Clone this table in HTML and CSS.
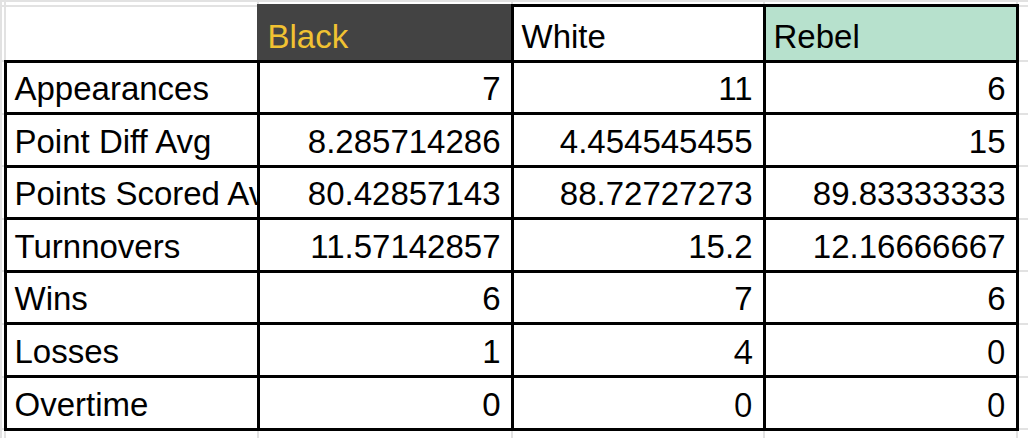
FILE: index.html
```html
<!DOCTYPE html>
<html>
<head>
<meta charset="utf-8">
<link rel="stylesheet" href="styles.css">
</head>
<body>
<table class="sheet">
  <colgroup>
    <col class="c-edge">
    <col class="c-label">
    <col class="c-black">
    <col class="c-white">
    <col class="c-rebel">
    <col class="c-rest">
  </colgroup>
  <tr class="r-top"><td></td><td></td><td></td><td></td><td></td><td></td></tr>
  <tr class="r-head">
    <td></td><td></td>
    <td class="h h-black">Black</td>
    <td class="h h-white">White</td>
    <td class="h h-rebel">Rebel</td>
    <td></td>
  </tr>
  <tr class="r-data">
    <td></td><td class="lbl">Appearances</td>
    <td class="num">7</td><td class="num">11</td><td class="num">6</td><td></td>
  </tr>
  <tr class="r-data">
    <td></td><td class="lbl">Point Diff Avg</td>
    <td class="num">8.285714286</td><td class="num">4.454545455</td><td class="num">15</td><td></td>
  </tr>
  <tr class="r-data">
    <td></td><td class="lbl">Points Scored Avg</td>
    <td class="num">80.42857143</td><td class="num">88.72727273</td><td class="num">89.83333333</td><td></td>
  </tr>
  <tr class="r-data">
    <td></td><td class="lbl">Turnnovers</td>
    <td class="num">11.57142857</td><td class="num">15.2</td><td class="num">12.16666667</td><td></td>
  </tr>
  <tr class="r-data">
    <td></td><td class="lbl">Wins</td>
    <td class="num">6</td><td class="num">7</td><td class="num">6</td><td></td>
  </tr>
  <tr class="r-data">
    <td></td><td class="lbl">Losses</td>
    <td class="num">1</td><td class="num alt">4</td><td class="num alt">0</td><td></td>
  </tr>
  <tr class="r-data">
    <td></td><td class="lbl">Overtime</td>
    <td class="num">0</td><td class="num alt">0</td><td class="num alt">0</td><td></td>
  </tr>
  <tr class="r-bottom"><td></td><td></td><td></td><td></td><td></td><td></td></tr>
</table>
</body>
</html>
```

FILE: styles.css
```css
html, body {
  margin: 0;
  padding: 0;
  background: #ffffff;
  overflow: hidden;
  width: 1028px;
  height: 438px;
}

.sheet {
  border-collapse: collapse;
  table-layout: fixed;
  width: 1040px;
  font-family: "Liberation Sans", Arial, sans-serif;
  font-size: 33px;
  color: #000000;
}

.c-edge { width: 4px; }
.c-label { width: 253px; }
.c-black { width: 254px; }
.c-white { width: 252px; }
.c-rebel { width: 253px; }
.c-rest { width: 24px; }

.sheet td {
  border: 2px solid #e2e2e2;
  padding: 0 10px 4px 8px;
  vertical-align: bottom;
  white-space: nowrap;
  overflow: hidden;
  line-height: 38px;
}

.r-top td { height: 2px; padding: 0; line-height: 0; }
.r-head td { height: 48.5px; }
.r-data td { height: 45.6px; }
.r-bottom td { height: 10px; padding: 0; line-height: 0; }

.sheet td.lbl,
.sheet td.num,
.sheet td.h-white,
.sheet td.h-rebel {
  border: 3px solid #000000;
}

.lbl { text-align: left; }
.num { text-align: right; }
.h { text-align: left; }

.sheet td.h-black {
  background: #434343;
  color: #f1c232;
  border-top: 3px solid #434343;
  border-left: 3px solid #434343;
  border-right: 3px solid #000000;
  border-bottom: 3px solid #000000;
}

.h-rebel { background: #b7e1cd; }

.alt { font-family: "Open Sans", "Liberation Sans", sans-serif; }
```
